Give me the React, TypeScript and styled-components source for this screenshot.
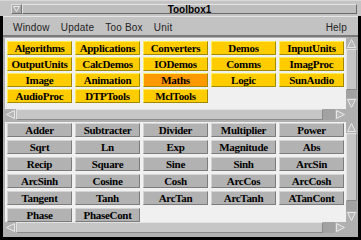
import React from "react";
import styled, { createGlobalStyle } from "styled-components";

const GlobalStyle = createGlobalStyle`
  html, body {
    margin: 0;
    padding: 0;
    background: #b8b8b8;
  }
`;

const toolboxes = [
  "Algorithms", "Applications", "Converters", "Demos", "InputUnits",
  "OutputUnits", "CalcDemos", "IODemos", "Comms", "ImagProc",
  "Image", "Animation", "Maths", "Logic", "SunAudio",
  "AudioProc", "DTPTools", "MclTools",
];

const units = [
  "Adder", "Subtracter", "Divider", "Multiplier", "Power",
  "Sqrt", "Ln", "Exp", "Magnitude", "Abs",
  "Recip", "Square", "Sine", "Sinh", "ArcSin",
  "ArcSinh", "Cosine", "Cosh", "ArcCos", "ArcCosh",
  "Tangent", "Tanh", "ArcTan", "ArcTanh", "ATanCont",
  "Phase", "PhaseCont",
];

const Window = styled.div`
  width: 361px;
  height: 240px;
  display: flex;
  flex-direction: column;
  background: #b8b8b8;
  overflow: hidden;
`;

const TitleBar = styled.div`
  height: 16px;
  box-sizing: border-box;
  display: flex;
  padding: 3px 4px 2px 11px;
  background: #c4c4c4;
  border-top: 1px solid #d8d8d8;
`;

const MenuButton = styled.div`
  width: 11px;
  height: 10px;
  box-sizing: border-box;
  border: 1px solid;
  border-color: #e0e0e0 #707070 #707070 #e0e0e0;
  background: #a8a8a8;
  display: flex;
  align-items: center;
  justify-content: center;
`;

const TitleStrip = styled.div`
  flex: 1;
  box-sizing: border-box;
  border: 1px solid;
  border-color: #e4e4e4 #6a6a6a #6a6a6a #e4e4e4;
  background: #bdbdbd;
  display: flex;
  align-items: center;
  justify-content: center;
  font-family: "Liberation Sans", Arial, sans-serif;
  font-weight: bold;
  font-size: 10px;
  color: #000;
`;

const Body = styled.div`
  flex: 1;
  display: flex;
  flex-direction: column;
  border-left: 3px solid #000;
  border-right: 3px solid #000;
  border-bottom: 3px solid #000;
  padding: 0 1px 2px 2px;
  background: #b0b0b0;
`;

const MenuBar = styled.div`
  height: 21px;
  box-sizing: border-box;
  margin: 0 -1px 0 -2px;
  display: flex;
  align-items: center;
  padding: 3px 11px 0 10px;
  gap: 11px;
  background: #c2c2c2;
  border-top: 1px solid #e6e6e6;
  border-bottom: 2px solid #7a7a7a;
  font-family: "Liberation Sans", Arial, sans-serif;
  font-size: 10px;
  letter-spacing: 0.2px;
  color: #222;
`;

const MenuItem = styled.span<{ $right?: boolean }>`
  margin-left: ${(p) => (p.$right ? "auto" : "0")};
`;

const Panel = styled.div<{ $height: number }>`
  display: grid;
  grid-template-columns: 341px 11px;
  grid-template-rows: ${(p) => p.$height}px 11px;
  margin-top: ${(p) => (p.$height > 80 ? 2 : 1)}px;
`;

const Viewport = styled.div<{ $rowH: number; $rowGap: number; $top: number }>`
  background: #f0f0f0;
  overflow: hidden;
  display: grid;
  grid-template-columns: repeat(5, 65px);
  grid-auto-rows: ${(p) => p.$rowH}px;
  column-gap: 3px;
  row-gap: ${(p) => p.$rowGap}px;
  padding: ${(p) => p.$top}px 0 0 2px;
  align-content: start;
`;

const ToolButton = styled.div<{ $active?: boolean }>`
  box-sizing: border-box;
  border: 1px solid;
  border-color: #ffee55 #a08a00 #a08a00 #ffee55;
  background: ${(p) => (p.$active ? "#ff9900" : "#ffcc00")};
  display: flex;
  align-items: center;
  justify-content: center;
  font-family: "Liberation Serif", "Times New Roman", serif;
  font-weight: bold;
  font-size: 11px;
  letter-spacing: -0.3px;
  color: #000;
  white-space: nowrap;
`;

const UnitButton = styled(ToolButton)`
  border-color: #d4d4d4 #7c7c7c #7c7c7c #d4d4d4;
  background: #b2b2b2;
`;

const VScroll = styled.div`
  display: flex;
  flex-direction: column;
  background: #b4b4b4;
`;

const HScroll = styled.div`
  display: flex;
  background: #b4b4b4;
`;

const Arrow = styled.div`
  width: 11px;
  height: 11px;
  flex: none;
  background: #b0b0b0;
  display: flex;
  align-items: center;
  justify-content: center;
`;

const Thumb = styled.div`
  flex: 1;
  box-sizing: border-box;
  background: #c6c6c6;
  border: 1px solid;
  border-color: #e2e2e2 #8a8a8a #8a8a8a #e2e2e2;
`;

const Trough = styled.div<{ $size: number; $vertical?: boolean }>`
  flex: none;
  ${(p) => (p.$vertical ? `height: ${p.$size}px;` : `width: ${p.$size}px;`)}
  background: #a2a2a2;
`;

const Corner = styled.div`
  background: #b0b0b0;
`;

type Dir = "up" | "down" | "left" | "right";

const points: Record<Dir, string> = {
  up: "5.5,1.5 9.5,9.5 1.5,9.5",
  down: "1.5,1.5 9.5,1.5 5.5,9.5",
  left: "1.5,5.5 9.5,1.5 9.5,9.5",
  right: "1.5,1.5 9.5,5.5 1.5,9.5",
};

const ArrowButton = ({ dir }: { dir: Dir }) => (
  <Arrow>
    <svg width="11" height="11" viewBox="0 0 11 11">
      <polygon points={points[dir]} fill="#b8b8b8" stroke="#e8e8e8" strokeWidth="1" />
    </svg>
  </Arrow>
);

const Scrollbars = ({ troughV }: { troughV: number }) => (
  <>
    <VScroll>
      <ArrowButton dir="up" />
      <Thumb />
      <Trough $vertical $size={troughV} />
      <ArrowButton dir="down" />
    </VScroll>
    <HScroll>
      <ArrowButton dir="left" />
      <Thumb />
      <Trough $size={12} />
      <ArrowButton dir="right" />
    </HScroll>
    <Corner />
  </>
);

export default function App() {
  return (
    <Window>
      <GlobalStyle />
      <TitleBar>
        <MenuButton>
          <svg width="7" height="6" viewBox="0 0 7 6">
            <path d="M0.5 0.5 H6.5 L3.5 5.5 Z" fill="none" stroke="#eeeeee" strokeWidth="1" />
          </svg>
        </MenuButton>
        <TitleStrip>Toolbox1</TitleStrip>
      </TitleBar>
      <Body>
        <MenuBar>
          <MenuItem>Window</MenuItem>
          <MenuItem>Update</MenuItem>
          <MenuItem>Too Box</MenuItem>
          <MenuItem>Unit</MenuItem>
          <MenuItem $right>Help</MenuItem>
        </MenuBar>
        <Panel $height={71}>
          <Viewport $rowH={14} $rowGap={2} $top={3}>
            {toolboxes.map((name) => (
              <ToolButton key={name} $active={name === "Maths"}>
                {name}
              </ToolButton>
            ))}
          </Viewport>
          <Scrollbars troughV={8} />
        </Panel>
        <Panel $height={100}>
          <Viewport $rowH={14} $rowGap={3} $top={1}>
            {units.map((name) => (
              <UnitButton key={name}>{name}</UnitButton>
            ))}
          </Viewport>
          <Scrollbars troughV={10} />
        </Panel>
      </Body>
    </Window>
  );
}
